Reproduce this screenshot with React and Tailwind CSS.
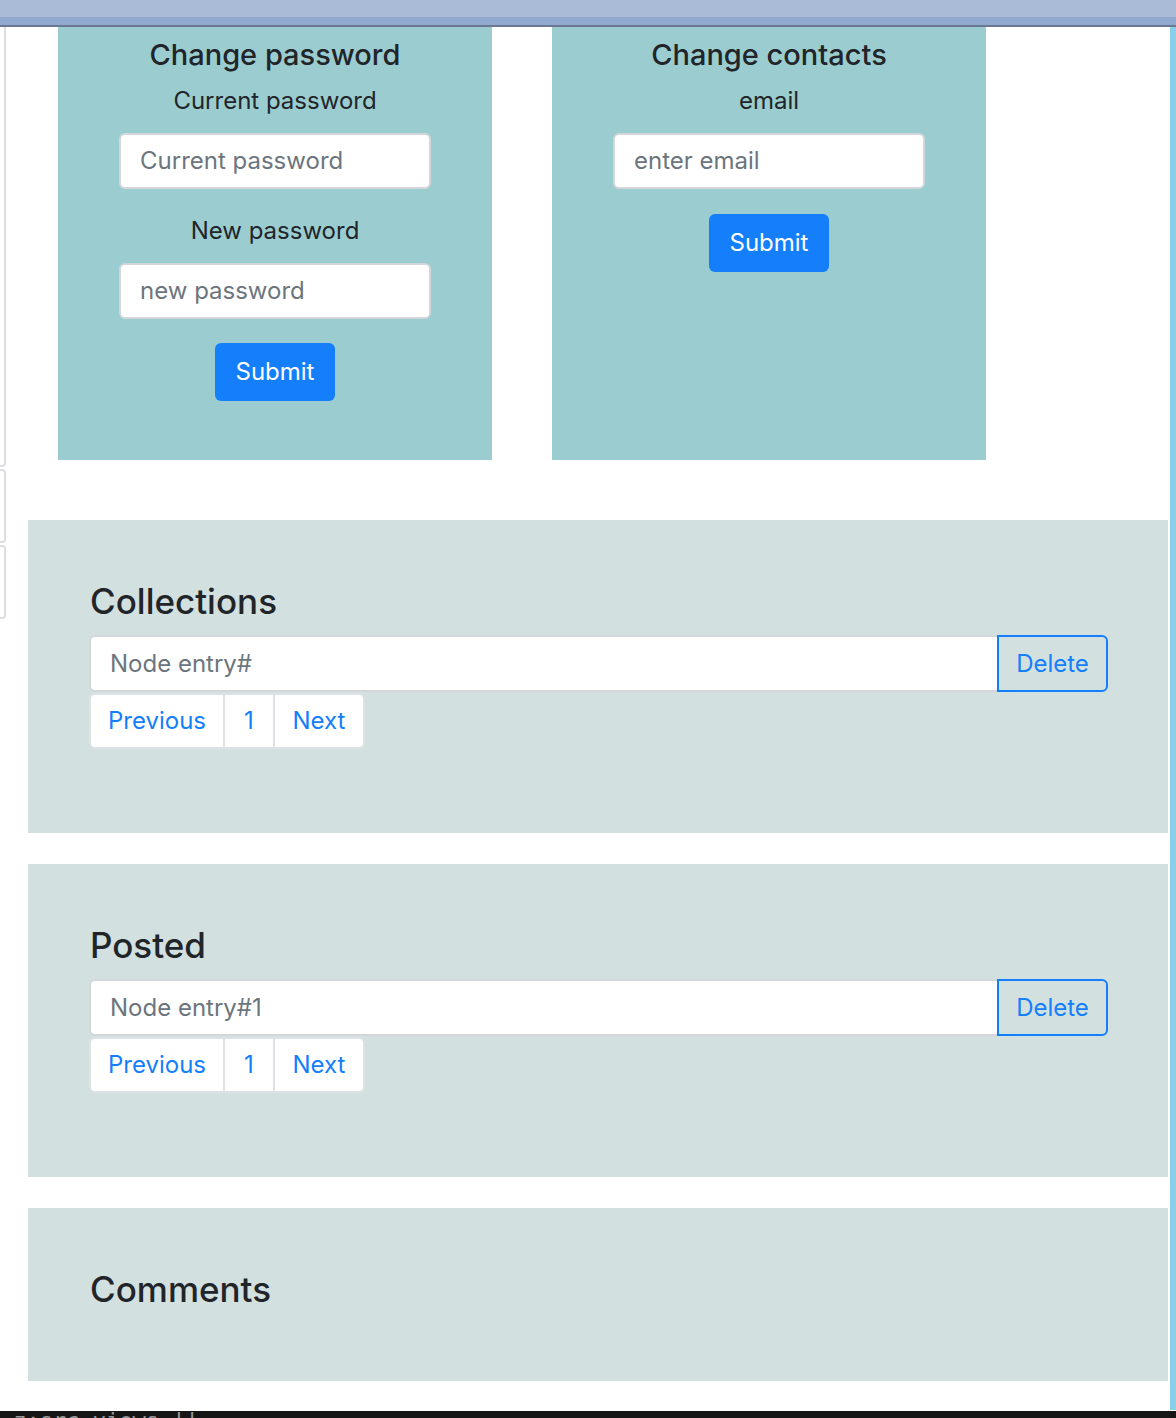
import React from "react";

const font = { fontFamily: "Inter, 'Liberation Sans', Arial, sans-serif" };

function Card({ title, children }) {
  return (
    <div className="w-[434px] h-[433px] bg-[#9bcdd0] flex flex-col items-center pt-[10px]">
      <h5 className="text-[29px] leading-[36px] font-medium text-[#212529]">{title}</h5>
      {children}
    </div>
  );
}

function Label({ children, className = "" }) {
  return <div className={"text-[24px] leading-[36px] text-[#212529] " + className}>{children}</div>;
}

function Input({ placeholder, className = "" }) {
  return (
    <div className={"w-[312px] h-[56px] bg-white border-2 border-[#d3d6da] rounded-[6px] flex items-center pl-[19px] text-[24px] text-[#6c757d] " + className}>
      {placeholder}
    </div>
  );
}

function SubmitBtn({ className = "" }) {
  return (
    <div className={"w-[120px] h-[58px] bg-[#147efb] rounded-[6px] flex items-center justify-center text-white text-[24px] " + className}>
      Submit
    </div>
  );
}

function Section({ title, entry, showList = true }) {
  return (
    <div className={"bg-[#d2e0e0] pl-[62px] pr-[60px] pt-[60px] " + (showList ? "pb-[84px]" : "pb-[58px]")}>
      <h4 className="text-[35px] leading-[43px] font-medium text-[#212529] mb-[12px]">{title}</h4>
      {showList && (
        <>
          <div className="flex h-[57px] -ml-[1px]">
            <div className="flex-1 bg-white border-2 border-[#d3d6da] border-r-0 rounded-l-[6px] flex items-center pl-[19px] text-[24px] text-[#6c757d]">
              {entry}
            </div>
            <div className="w-[111px] border-2 border-[#147efb] rounded-r-[6px] flex items-center justify-center text-[24px] text-[#147efb]">
              Delete
            </div>
          </div>
          <div className="flex h-[56px] mt-[1px] -ml-[1px] text-[24px] text-[#147efb]">
            <div className="w-[136px] bg-white border-2 border-[#dee2e6] rounded-l-[6px] flex items-center justify-center">Previous</div>
            <div className="w-[50px] bg-white border-2 border-l-0 border-[#dee2e6] flex items-center justify-center">1</div>
            <div className="w-[90px] bg-white border-2 border-l-0 border-[#dee2e6] rounded-r-[6px] flex items-center justify-center">Next</div>
          </div>
        </>
      )}
    </div>
  );
}

export default function App() {
  return (
    <div className="relative w-[1176px] h-[1418px] overflow-hidden bg-white" style={font}>
      {/* top bar */}
      <div className="h-[17px] bg-[#a9bbd6]" />
      <div className="h-[8px] bg-[#91a9cf]" />
      <div className="h-[2px] bg-[#6b7893]" />

      {/* left edge of cut-off panel */}
      <div className="absolute left-0 top-[27px] w-[6px] flex flex-col">
        <div className="h-[440px] border-r-2 border-b-2 border-[#dcdee2] rounded-br-[4px]" />
        <div className="h-[74px] mt-[2px] border-2 border-l-0 border-[#dcdee2] rounded-r-[4px]" />
        <div className="h-[74px] mt-[2px] border-2 border-l-0 border-[#dcdee2] rounded-r-[4px]" />
      </div>

      <div className="flex">
        <div className="w-[1170px]">
          {/* cards */}
          <div className="flex gap-[60px] pl-[58px]">
            <Card title="Change password">
              <Label className="mt-[10px]">Current password</Label>
              <Input placeholder="Current password" className="mt-[14px]" />
              <Label className="mt-[24px]">New password</Label>
              <Input placeholder="new password" className="mt-[14px] h-[55px]" />
              <SubmitBtn className="mt-[24px]" />
            </Card>
            <Card title="Change contacts">
              <Label className="mt-[10px]">email</Label>
              <Input placeholder="enter email" className="mt-[14px]" />
              <SubmitBtn className="mt-[25px]" />
            </Card>
          </div>

          <div className="pl-[28px] pr-[2px] mt-[60px] flex flex-col gap-[31px]">
            <Section title="Collections" entry="Node entry#" />
            <Section title="Posted" entry="Node entry#1" />
            <Section title="Comments" showList={false} />
          </div>
        </div>
        <div className="w-[6px] h-[1383px] bg-[#89cfe9]" />
      </div>

      {/* bottom terminal edge */}
      <div className="absolute left-0 right-0 bottom-0 h-[7px] bg-[#161616] overflow-hidden">
        <div className="text-[22px] leading-[22px] text-[#9a9a9a] -mt-[1px] whitespace-nowrap" style={{ fontFamily: "'DejaVu Sans Mono', monospace" }}>
          =z:src views ||
        </div>
      </div>
    </div>
  );
}
